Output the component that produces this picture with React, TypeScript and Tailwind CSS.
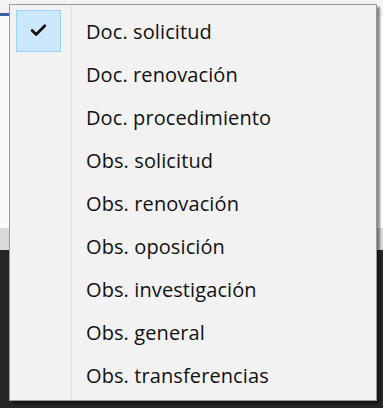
import { Check } from "lucide-react";

const items = [
  "Doc. solicitud",
  "Doc. renovación",
  "Doc. procedimiento",
  "Obs. solicitud",
  "Obs. renovación",
  "Obs. oposición",
  "Obs. investigación",
  "Obs. general",
  "Obs. transferencias",
];

export default function App() {
  return (
    <div className="relative w-[383px] h-[408px] overflow-hidden bg-[#f0f0f0]">
      {/* background window behind the menu */}
      <div className="flex flex-col h-full">
        <div className="h-[13px] bg-[#f3f3f3]" />
        <div className="h-[3px] w-[10px] bg-[#3a5fa8]" />
        <div className="h-[212px] bg-[#fafafa]" />
        <div className="h-[22px] bg-[#d9d9d9]" />
        <div className="flex-1 bg-[#262626]" />
      </div>

      {/* context menu */}
      <div className="absolute left-[9px] top-[4px] w-[368px] h-[397px] bg-[#f2f2f2] border border-[#999999] shadow-[3px_3px_2px_rgba(0,0,0,0.45)]">
        <div className="absolute left-[61px] top-0 bottom-0 w-px bg-[#e2e2e2]" />
        <div className="flex flex-col pt-[5px]">
          {items.map((label, i) => (
            <div key={label} className="flex items-center h-[43px]">
              <div className="w-[62px] h-full flex items-center pl-[6px]">
                {i === 0 && (
                  <div className="w-[45px] h-[42px] -mt-[2px] bg-[#cce8ff] border border-[#99d1ff] flex items-center justify-center">
                    <Check className="w-[19px] h-[19px] text-[#111]" strokeWidth={3.5} />
                  </div>
                )}
              </div>
              <span
                className="pl-[14px] text-[20px] text-[#111] tracking-[0.1px]"
                style={{ fontFamily: '"Open Sans", "Noto Sans", sans-serif' }}
              >
                {label}
              </span>
            </div>
          ))}
        </div>
      </div>
    </div>
  );
}
